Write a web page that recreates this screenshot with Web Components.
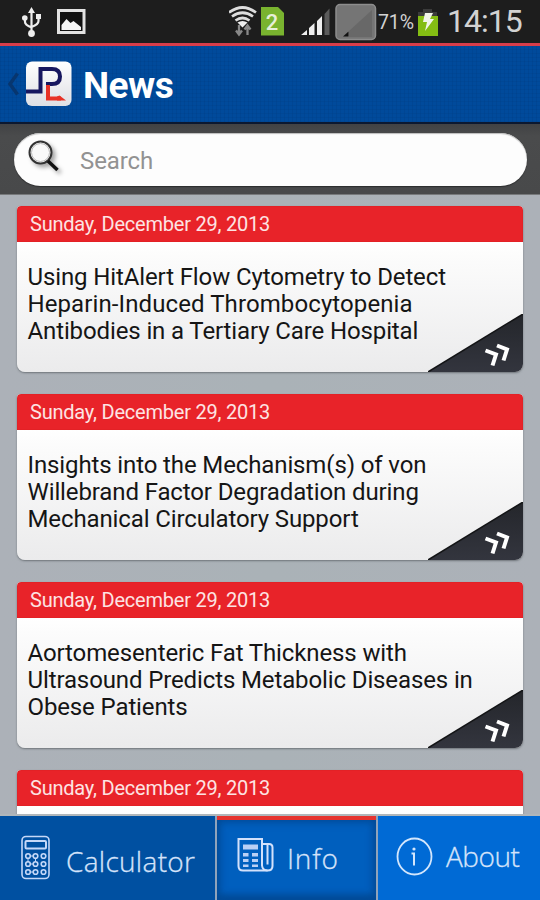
<!DOCTYPE html>
<html lang="en">
<head>
<meta charset="utf-8">
<title>News</title>
<style>
  html, body { margin: 0; height: 100%; }
  body { overflow: hidden; font-family: Roboto, "Liberation Sans", sans-serif; background: #aab0b5; }
</style>
</head>
<body>
<news-app></news-app>

<script>
(function () {
    'use strict';

    function define(name, html) {
        customElements.define(name, class extends HTMLElement {
            constructor() {
                super();
                this.attachShadow({ mode: 'open' }).innerHTML = html;
            }
        });
    }

    define('status-bar', `
      <style>
        :host { display: flex; height: 43px; background: #1d1d1d; color: #d2d2d2; }
        svg { display: block; flex: none; }
        .left { width: 229px; }
        .battery { font-size: 19.5px; line-height: 46px; width: 38px; letter-spacing: -0.1px; white-space: nowrap; }
        .time { font-size: 32px; line-height: 43px; margin-left: 7px; white-space: nowrap; letter-spacing: -1px; }
      </style>
      <svg class="left" width="229" height="43" viewBox="0 0 229 43">
        <g fill="none" stroke="#eee" stroke-width="2.2">
          <path d="M31.5 12v22M25 18v4q0 3 6.500 5.500M38.500 18v3q0 3.500-7 6"/>
        </g>
        <g fill="#eee"><path d="M31.500 7l3.500 6h-7zM36 14h5v5h-5z"/><circle cx="24.800" cy="18" r="2.800"/><circle cx="31.500" cy="33.500" r="3.400"/></g>
        <path d="M58.500 10.500h25.500v22h-25.500z" fill="#111" stroke="#e2e2e2" stroke-width="3"/>
        <path d="M61.500 30v-5l5-6 4 4 3-2 7.500 6v3z" fill="#f4f4f4"/>
      </svg>
      <svg width="149" height="43" viewBox="229 0 149 43">
        <g fill="none" stroke="#dedede" stroke-width="2.700">
          <path d="M229 12.500q13.500-10 27 0M232 16.500q10.500-7.500 21 0M235.500 20.500q7-5 14 0"/>
        </g>
        <path d="M237.500 22.500q5-3.200 10 0l-5 5z" fill="#eee"/>
        <path d="M239 25v9M236 30.500l3 4 3-4M247.500 35v-9M244.500 29.500l3-4 3 4" fill="none" stroke="#888" stroke-width="2.300"/>
        <path d="M261 7h17l6 6v22.500h-23z" fill="#79b32f"/>
        <text x="272" y="30" text-anchor="middle" font-size="22" font-weight="500" fill="#e6efd9">2</text>
        <path d="M301 35l6-5v5zM309 28l5.500-5v12H309zM317 21l5-5v19h-5z" fill="#eee"/>
        <path d="M324.500 14l5-5.500V35h-5z" fill="#5b5b5b"/>
        <rect x="336" y="4.500" width="39.500" height="35" rx="4" fill="#757575" stroke="#8d8d8d" stroke-width="1.500"/>
        <path d="M372 10v27h-23V31z" fill="#686868"/>
        <path d="M343 36.500l5.500-5v5z" fill="#111"/>
      </svg>
      <span class="battery">71%</span>
      <svg width="24" height="43" viewBox="416 0 24 43">
        <path d="M423 9h9v3h5v4h-19v-4h5z" fill="#3b3b3b"/>
        <path d="M418 16h20v20h-20z" fill="#84bd13"/>
        <path d="M425 13h8l-3 6h4l-9 12 2-9h-4z" fill="#f1f5e9"/>
      </svg>
      <span class="time">14:15</span>`);

    define('title-bar', `
      <style>
        :host {
          display: flex; align-items: center; box-sizing: border-box; height: 81px;
          border-top: 3px solid #d83d49; border-bottom: 2px solid #0c1830;
          background:
            repeating-linear-gradient(90deg, rgba(0,20,60,.07) 0 1px, transparent 1px 4px),
            repeating-linear-gradient(0deg, rgba(0,20,60,.06) 0 1px, transparent 1px 4px),
            #004a9b;
          color: #fff;
        }
        svg { display: block; }
        h1 { margin: 4px 0 0 11px; font-size: 37px; line-height: 44px; font-weight: 700; letter-spacing: -0.5px; }
      </style>
      <svg width="72" height="76" viewBox="0 46 72 76">
        <defs>
          <linearGradient id="tile" x2="0" y2="1"><stop stop-color="#fff"/><stop offset="1" stop-color="#dedfe4"/></linearGradient>
        </defs>
        <path d="M17.500 73.500L10 84l7.500 10.500" fill="none" stroke="#07366f" stroke-width="3.500"/>
        <rect x="26" y="61.500" width="45.500" height="44.500" rx="6" fill="url(#tile)"/>
        <path d="M26 91.500h14.500V69H52q8 0 8 7.500T52 84h-6" fill="none" stroke="#17175f" stroke-width="4"/>
        <path d="M48 85v13.500h13" fill="none" stroke="#e83226" stroke-width="4"/>
        <path d="M57 96.500l2.500-1 6.500 5h-9z" fill="#e83226"/>
      </svg>
      <h1><slot></slot></h1>`);

    define('search-box', `
      <style>
        :host {
          display: block; box-sizing: border-box; height: 71px; padding: 9px 13.500px 0 14px;
          background: linear-gradient(#414244, #4a4b4c 12px, #48494a); border-bottom: 1px solid #77797b;
        }
        .field {
          display: flex; align-items: center; height: 53px; border-radius: 27px;
          background: #fdfdfd; box-shadow: 0 1px 1px #2c2d2e, inset 0 1px 1px #bbb;
        }
        svg { margin-left: 12px; filter: drop-shadow(3px 3px 2px rgba(0,0,0,.35)); }
        span { margin: 2px 0 0 14px; font-size: 24px; color: #929292; letter-spacing: -0.1px; }
      </style>
      <div class="field">
        <svg width="40" height="42" viewBox="26 138 40 42">
          <circle cx="40.500" cy="151.500" r="11" fill="#fafafa" stroke="#333" stroke-width="2"/>
          <circle cx="40.500" cy="151.500" r="9" fill="none" stroke="#bbb"/>
          <path d="M48 160l9.500 9" stroke="#111" stroke-width="3.500"/>
        </svg>
        <span><slot></slot></span>
      </div>`);

    define('news-card', `
      <style>
        :host {
          display: flex; flex-direction: column; flex: none; height: 166.500px;
          border-radius: 4px 4px 8px 8px; overflow: hidden;
          box-shadow: 0 1px 2px rgba(60,65,70,.55);
          background: linear-gradient(#fff 36px, #fcfcfc 50px, #ebebec);
        }
        header {
          flex: none; height: 36px; padding-left: 13px; background: #e82329; color: #fde3e3;
          font-size: 20px; line-height: 37px; border-radius: 4px 4px 0 0; letter-spacing: -0.22px;
          box-shadow: inset 0 0 1px #b81418;
        }
        .body { flex: 1; display: grid; }
        .title {
          grid-area: 1 / 1; padding: 22.200px 0 0 10.500px; color: #151515;
          font-size: 24px; line-height: 27px; letter-spacing: -0.12px;
        }
        ::slotted(p) { margin: 0; white-space: nowrap; }
        ::slotted(p.wide) { letter-spacing: .1px; }
        svg { grid-area: 1 / 1; place-self: end; display: block; }
      </style>
      <header><slot name="date"></slot></header>
      <div class="body">
        <div class="title"><slot></slot></div>
        <svg width="95" height="58" viewBox="0 0 95 58">
          <defs><linearGradient id="fold" x2="0" y2="1"><stop stop-color="#24262b"/><stop offset="1" stop-color="#33353e"/></linearGradient></defs>
          <path d="M0 58L95 0v58z" fill="url(#fold)"/>
          <path d="M0 58L95 0" stroke="#131416" stroke-width="1.500"/>
          <g fill="none" stroke="#fff" stroke-width="4">
            <path d="M57.500 36.500l10.500 4-3.500 11M69 31.500l10 4-3.500 11"/>
          </g>
        </svg>
      </div>`);

    define('tab-item', `
      <style>
        :host {
          display: flex; box-sizing: border-box; height: 84px; color: #d5e3fa;
          background: #0050a1; font-family: "Open Sans", "Noto Sans", sans-serif; font-weight: 300;
        }
        :host([selected]) {
          border-top: 4.500px solid #e6332e; background: #005fbe;
          box-shadow: inset 0 0 9px 2px #004a97, inset 0 -5px 7px #004c98;
        }
        .label { font-size: 28px; line-height: 36px; white-space: nowrap; -webkit-text-stroke: .3px; }
        ::slotted(svg) { display: block; flex: none; }
      </style>
      <slot name="icon"></slot>
      <span class="label" part="label"><slot></slot></span>`);

    define('tab-row', `
      <style>
        :host {
          display: flex; gap: 2px; flex: none; background: #8fa3bb; border-top: 2.500px solid #b0b6ba;
          height: 84px;
        }
        .calc { width: 215px; }
        .info { width: 159px; }
        .about { flex: 1; background: #006ad5; }
        .calc::part(label) { margin: 27px 0 0 12px; letter-spacing: .3px; }
        .info::part(label) { margin: 19.500px 0 0 9px; letter-spacing: .8px; }
        .about::part(label) { margin: 22px 0 0 10px; letter-spacing: -0.5px; }
      </style>
      <tab-item class="calc">
        <svg slot="icon" width="54" height="84" viewBox="0 816 54 84" fill="none" stroke="#c5d8f8" stroke-width="1.600">
          <rect x="22" y="836.500" width="27" height="42" rx="4"/>
          <rect x="25.500" y="841" width="20.500" height="7.500" rx="1" stroke-width="2"/>
          <circle cx="28" cy="856" r="2.300"/><circle cx="35.500" cy="856" r="2.300"/><circle cx="43.500" cy="856" r="2.300"/>
          <circle cx="28" cy="864" r="2.300"/><circle cx="35.500" cy="864" r="2.300"/><circle cx="43.500" cy="864" r="2.300"/>
          <circle cx="28" cy="872" r="2.300"/><circle cx="35.500" cy="872" r="2.300"/><circle cx="43.500" cy="872" r="2.300"/>
          <path d="M30 856h4M30 864h4M30 872h4M28 858v4M35.500 858v4" stroke-width="1"/>
        </svg>Calculator</tab-item>
      <tab-item class="info" selected>
        <svg slot="icon" width="61" height="79" viewBox="217 820.500 61 79" fill="none" stroke="#d3e1fb" stroke-width="2">
          <path d="M262 862v-22.500h-23.500v27q0 4.500 4.500 4.500h24.500"/>
          <path d="M262 844.500h7q3.500 0 3.500 3.500v18.500q0 4.500-5 4.500t-5.500-5v-6M267.500 845v20"/>
          <path d="M243 845h15v5h-15zM243 853.500h5.500v3.500H243zM252 853.500h6v3.500h-6zM243 859.500h5.500v3H243zM252 859.500h6v3h-6zM243 865h5.500v2.500H243zM252 865h6v2.500h-6z" fill="#b9cff5" stroke="none"/>
        </svg>Info</tab-item>
      <tab-item class="about">
        <svg slot="icon" width="58" height="84" viewBox="378 816 58 84" fill="none" stroke="#d3e6fc" stroke-width="1.800">
          <ellipse cx="414.500" cy="856.500" rx="17" ry="18"/>
          <path d="M411.500 853.500h2.500v12" stroke-width="2"/><circle cx="414" cy="849" r="1.600" fill="#d3e6fc" stroke="none"/>
        </svg>About</tab-item>`);

    const articles = [
        `<p>Using HitAlert Flow Cytometry to Detect</p>
         <p class="wide">Heparin-Induced Thrombocytopenia</p>
         <p>Antibodies in a Tertiary Care Hospital</p>`,
        `<p>Insights into the Mechanism(s) of von</p>
         <p>Willebrand Factor Degradation during</p>
         <p>Mechanical Circulatory Support</p>`,
        `<p>Aortomesenteric Fat Thickness with</p>
         <p>Ultrasound Predicts Metabolic Diseases in</p>
         <p>Obese Patients</p>`,
        ''
    ];

    define('news-app', `
      <style>
        :host { display: flex; flex-direction: column; width: 540px; height: 900px; overflow: hidden; }
        status-bar, title-bar, search-box { flex: none; }
        main {
          flex: 1; min-height: 0; overflow: hidden; box-sizing: border-box; padding: 10.500px 17px 0;
          display: flex; flex-direction: column; gap: 21.500px;
          background: linear-gradient(90deg, #acb1b8, #aab2b7 50%, #acb1b8);
        }
      </style>
      <status-bar></status-bar>
      <title-bar>News</title-bar>
      <search-box>Search</search-box>
      <main>${articles.map(title => `
        <news-card><span slot="date">Sunday, December 29, 2013</span>${title}</news-card>`).join('')}
      </main>
      <tab-row></tab-row>`);
})();
</script>
</body>
</html>
